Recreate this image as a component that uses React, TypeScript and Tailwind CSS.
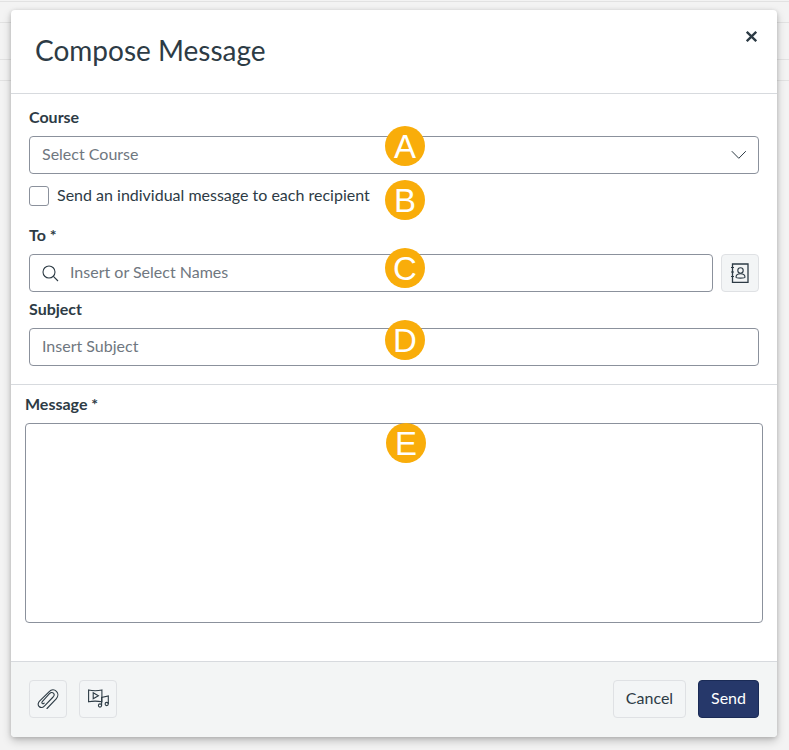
import React from "react";

function Badge({ letter, className }: { letter: string; className: string }) {
  return (
    <div
      className={`absolute flex h-10 w-10 items-center justify-center rounded-full bg-[#f9ad0a] text-[33px] leading-none text-white ${className}`}
      style={{ fontFamily: '"Liberation Sans", Arial, sans-serif' }}
    >
      {letter}
    </div>
  );
}

function Label({ children, className = "" }: { children: React.ReactNode; className?: string }) {
  return <div className={`text-[16px] font-bold leading-5 text-[#2d3b45] ${className}`}>{children}</div>;
}

function Chevron() {
  return (
    <svg width="16" height="16" viewBox="0 0 16 16" fill="none" stroke="#2d3b45" strokeWidth="1">
      <path d="M.8 4.200 7.800 11.300 14.800 4.200" />
    </svg>
  );
}

function SearchIcon() {
  return (
    <svg width="17" height="17" viewBox="0 0 17 17" fill="none" stroke="#2d3b45" strokeWidth="1.1">
      <circle cx="7" cy="7" r="6" />
      <path d="M11.400 11.400 16 16" />
    </svg>
  );
}

function ContactsIcon() {
  return (
    <svg width="18" height="20" viewBox="0 0 18 20" fill="none" stroke="#2d3b45" strokeWidth="1.1">
      <path d="M1.500 1h15.500v18.500H1.500z" strokeWidth="1.300" />
      <path d="M0 4.500h3M0 9h3M0 13.500h3" />
      <circle cx="9.500" cy="7.500" r="2.700" />
      <path d="M5 14.300c0-2.400 1.700-3.600 4.500-3.600s4.500 1.200 4.500 3.600c0 .5-1 .8-4.500.8S5 14.800 5 14.300z" />
    </svg>
  );
}

function ClipIcon() {
  return (
    <svg width="22" height="22" viewBox="0 0 22 22" fill="none" stroke="#2d3b45" strokeWidth="1.1" strokeLinecap="round">
      <path d="M10 20.500 19.200 10.800c2.300-2.500 2.100-5.600.2-7.500-2-1.900-5-1.900-7.200.3L2.800 12.900c-1.900 1.900-2.200 4.200-.7 5.600 1.500 1.400 3.700 1.100 5.500-.7l8.500-8.800c1.200-1.300 1.300-2.900.3-3.900s-2.500-.8-3.700.4L5.500 13.300c-.7.8-.8 1.600-.3 2.100s1.300.4 2-.3" />
    </svg>
  );
}

function MediaIcon() {
  return (
    <svg width="21" height="19" viewBox="0 0 21 19" fill="none" stroke="#2d3b45" strokeWidth="1.1">
      <path d="M.6 1c4.500 1 8.500 1 13.300 0v11.800c-4.800-1-8.800-1-13.300 0z" />
      <path d="M5.200 3.800v6l5.200-3z" />
      <circle cx="12" cy="16.500" r="1.600" fill="#f3f5f6" />
      <circle cx="18.700" cy="15" r="1.600" fill="#f3f5f6" />
      <path d="M13.600 16.500V8.400l6.700-1.500V15" />
    </svg>
  );
}

export default function App() {
  return (
    <div
      className="relative h-[750px] w-full overflow-hidden bg-[#f3f3f3] pl-[11px] pt-[10px]"
      style={{ fontFamily: 'Lato, "Noto Sans", sans-serif' }}
    >
      <div className="absolute inset-x-0 top-[1px] h-px bg-[#e2e2e2]" />
      <div className="absolute inset-x-0 top-[22px] h-px bg-[#e2e2e2]" />
      <div className="absolute inset-x-0 top-[59px] h-px bg-[#e2e2e2]" />
      <div className="absolute inset-x-0 top-[80px] h-px bg-[#e2e2e2]" />

      <div className="relative flex h-[727px] w-[766px] flex-col overflow-hidden rounded-[4px] bg-white shadow-[0_4px_10px_rgba(0,0,0,0.2),0_1px_4px_rgba(0,0,0,0.16)]">
        {/* Header */}
        <div className="relative flex h-[84px] shrink-0 items-center border-b border-[#d7dade] pb-[3px] pl-[24px]">
          <h1 className="text-[28px] font-normal leading-9 text-[#2d3b45]">Compose Message</h1>
          <svg className="absolute right-[20px] top-[21px]" width="11" height="11" viewBox="0 0 11 11" stroke="#2d3b45" strokeWidth="2.300">
            <path d="M.8.8l9.400 9.400M10.200.8.800 10.200" />
          </svg>
        </div>

        {/* Upper form */}
        <div className="shrink-0 border-b border-[#d7dade] px-[18px] pt-[13px]">
          <Label>Course</Label>
          <div className="mt-[9px] flex h-[38px] items-center justify-between rounded-[4px] border border-[#8b919c] pl-3 pr-[11px] text-[16px] text-[#6f7780]">
            <span className="pb-[2px]">Select Course</span>
            <Chevron />
          </div>
          <div className="mt-[12px] flex h-[20px] items-center gap-2">
            <div className="h-5 w-5 rounded-[3px] border border-[#8b919c]" />
            <span className="pb-[2px] text-[16px] text-[#2d3b45]">Send an individual message to each recipient</span>
          </div>
          <Label className="mt-[19px]">To *</Label>
          <div className="mt-[9px] flex h-[38px] gap-2">
            <div className="flex flex-1 items-center gap-[11px] rounded-[4px] border border-[#8b919c] pl-3 text-[16px] text-[#6f7780]">
              <SearchIcon />
              <span className="pb-[2px]">Insert or Select Names</span>
            </div>
            <div className="flex w-[38px] items-center justify-center rounded-[4px] border border-[#dfe1e4] bg-[#f3f5f6]">
              <ContactsIcon />
            </div>
          </div>
          <Label className="mt-[7px]">Subject</Label>
          <div className="mt-[9px] flex h-[38px] items-center rounded-[4px] border border-[#8b919c] pb-[2px] pl-3 text-[16px] text-[#6f7780]">
            Insert Subject
          </div>
          <div className="h-[18px]" />
        </div>

        {/* Message */}
        <div className="flex flex-1 flex-col px-[14px] pt-[9px]">
          <Label>Message *</Label>
          <div className="mt-[9px] h-[200px] rounded-[4px] border border-[#8b919c]" />
        </div>

        {/* Footer */}
        <div className="flex h-[76px] shrink-0 items-center justify-between border-t border-[#d7dade] bg-[#f3f5f5] px-[18px] pb-[2px]">
          <div className="flex gap-3">
            <div className="flex h-[38px] w-[38px] items-center justify-center rounded-[4px] border border-[#dfe1e4] bg-[#f3f5f6]">
              <ClipIcon />
            </div>
            <div className="flex h-[38px] w-[38px] items-center justify-center rounded-[4px] border border-[#dfe1e4] bg-[#f3f5f6]">
              <MediaIcon />
            </div>
          </div>
          <div className="flex gap-3">
            <button className="flex h-[38px] w-[73px] items-center justify-center rounded-[4px] border border-[#dfe1e4] bg-[#f3f5f6] pb-[2px] text-[16px] text-[#2d3b45]">
              Cancel
            </button>
            <button className="flex h-[38px] w-[61px] items-center justify-center rounded-[4px] border border-[#1a2b56] bg-[#26386a] pb-[2px] text-[16px] text-white">
              Send
            </button>
          </div>
        </div>
      </div>

      <Badge letter="A" className="left-[385px] top-[126px]" />
      <Badge letter="B" className="left-[385px] top-[180px]" />
      <Badge letter="C" className="left-[385px] top-[248px]" />
      <Badge letter="D" className="left-[385px] top-[320px]" />
      <Badge letter="E" className="left-[386px] top-[423px]" />
    </div>
  );
}
